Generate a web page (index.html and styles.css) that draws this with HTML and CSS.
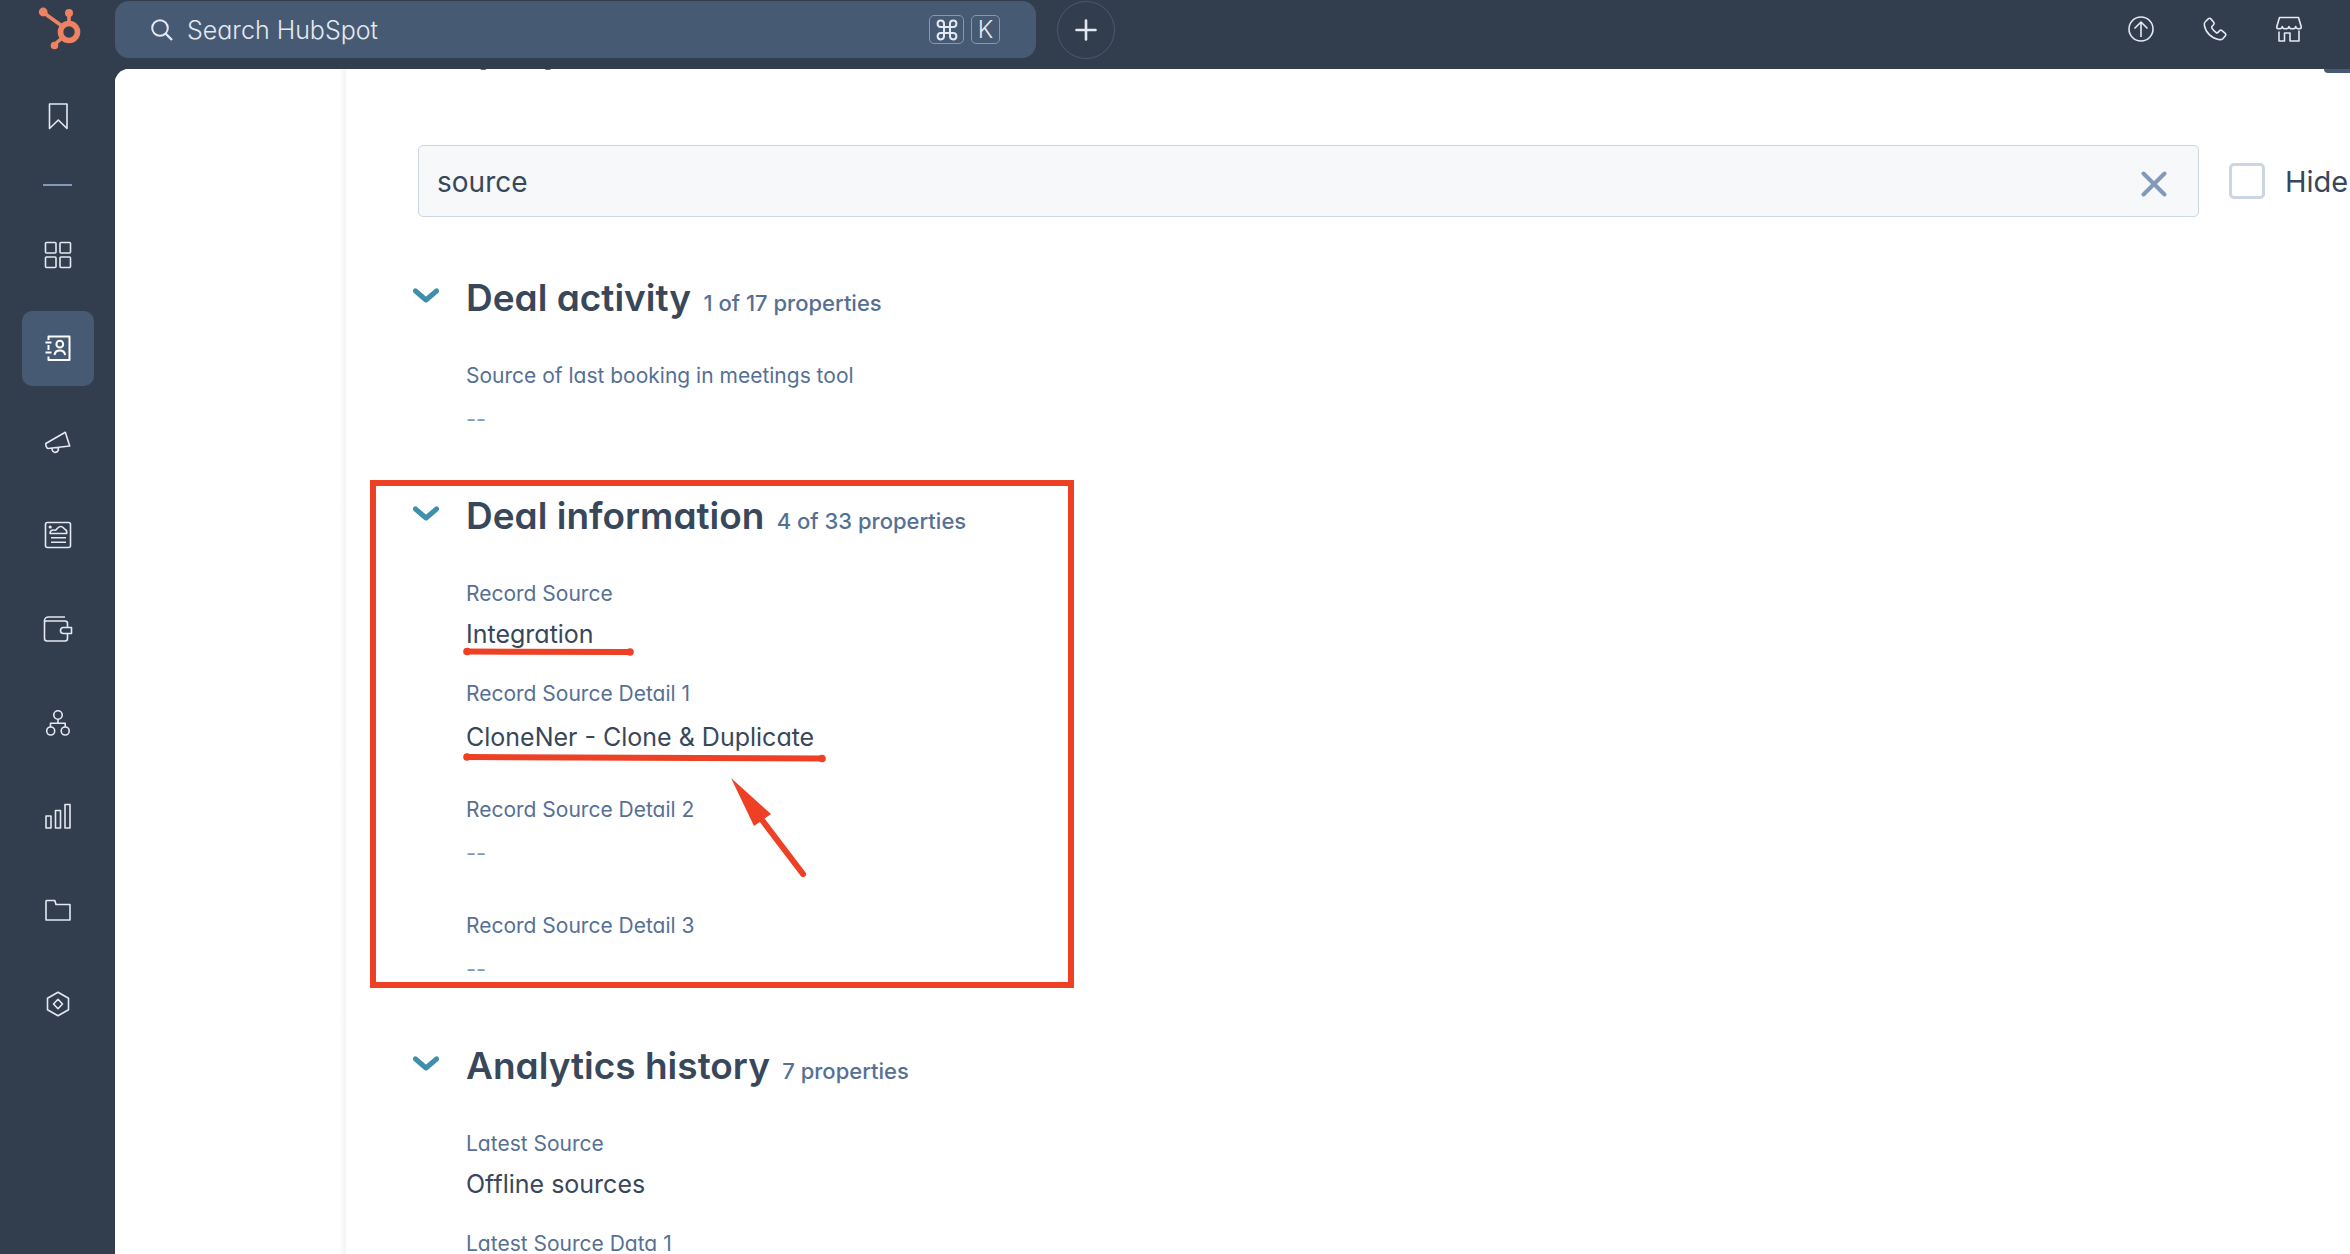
FILE: index.html
```html
<!DOCTYPE html>
<html lang="en">
<head>
<meta charset="utf-8">
<title>HubSpot – All properties</title>
<link rel="stylesheet" href="styles.css">
</head>
<body>
<div class="app">
  <header class="topbar">
    <a class="logo" href="#" aria-label="HubSpot home">
      <svg width="44" height="44" viewBox="0 0 44 44" fill="none" stroke="currentColor">
        <circle cx="31" cy="26" r="8.5" stroke-width="5.6"/>
        <path d="M31 17V8M6 7l18 13M16 39l8-7" stroke-width="3.6"/>
        <g fill="currentColor" stroke="none"><circle cx="5.200" cy="6" r="4.400"/><circle cx="31" cy="7" r="4"/><circle cx="16.500" cy="39.500" r="3.800"/></g>
      </svg>
    </a>
    <form class="search" role="search">
      <svg class="search-icon" width="24" height="24" viewBox="0 0 24 24" fill="none" stroke="currentColor" stroke-width="2"><circle cx="10" cy="10" r="7.800"/><path d="M15.500 15.500l6.500 6.500" stroke-width="2.400"/></svg>
      <input class="search-input" type="text" placeholder="Search HubSpot" aria-label="Search HubSpot">
      <kbd class="key key-cmd" aria-label="Command"><svg width="22" height="22" viewBox="0 0 22 22" fill="none" stroke="currentColor" stroke-width="2"><path d="M8 8H4.700A3.200 3.200 0 1 1 8 4.700V17.300A3.200 3.200 0 1 1 4.700 14H17.300A3.200 3.200 0 1 1 14 17.300V4.700A3.200 3.200 0 1 1 17.300 8Z"/></svg></kbd>
      <kbd class="key">K</kbd>
    </form>
    <button class="add" type="button" aria-label="Create">
      <svg width="22" height="22" viewBox="0 0 22 22" stroke="currentColor" stroke-width="2.600" stroke-linecap="round"><path d="M11 1.500v19M1.500 11h19"/></svg>
    </button>
    <nav class="tools" aria-label="Tools">
      <a href="#" aria-label="Upgrade"><svg width="28" height="28" viewBox="0 0 28 28"><circle cx="14" cy="14" r="12"/><path d="M14 22V7.500M7.500 13.500l6.500-6.500 6.500 6.500"/></svg></a>
      <a href="#" aria-label="Calling"><svg width="28" height="28" viewBox="0 0 28 28"><path d="M4.500 6.500L7.500 3.700c.8-.7 1.700-.6 2.400.2l2.800 3.300c.7.900.6 1.800-.1 2.600l-1.500 1.500c-.6.6-.6 1.100-.2 1.800 1.200 2 2.500 3.400 4.500 4.600.7.4 1.200.3 1.700-.3l1.400-1.600c.8-.8 1.700-.9 2.500-.2l3.200 2.700c.8.700.9 1.600.2 2.400l-2.600 3c-1 1.100-2.600 1.100-4.400.8C10.500 23.300 4.700 17.500 3.400 10.600c-.3-1.600-.1-3.100 1.100-4.100z"/></svg></a>
      <a href="#" aria-label="Marketplace"><svg width="28" height="28" viewBox="0 0 28 28"><path d="M4.500 2.500h19l2.800 9.500c0 1.200-1 1.800-2.300 1.800-1.800 0-3.300-1.300-3.300-2.300 0 1.300-1.500 2.300-3.300 2.300s-3.400-1-3.400-2.300c0 1.300-1.600 2.300-3.400 2.300s-3.300-1-3.300-2.300c0 1-1.500 2.300-3.300 2.300-1.300 0-2.300-.6-2.300-1.800zM4 16.500V26h5.500v-8H15v8h9V15.500"/></svg></a>
    </nav>
  </header>

  <div class="body">
    <nav class="sidebar" aria-label="Main">
      <a class="nav-item" href="#" aria-label="Bookmarks"><svg width="32" height="32" viewBox="0 0 32 32"><path d="M7.500 4h17.500v24.500l-8.700-8.500-8.800 8.500z"/></svg></a>
      <hr class="nav-rule">
      <div class="nav-list">
        <a class="nav-item" href="#" aria-label="Workspaces"><svg width="32" height="32" viewBox="0 0 32 32"><rect x="3.500" y="3.500" width="10.500" height="10.500" rx="1"/><rect x="18" y="3.500" width="10.500" height="10.500" rx="1"/><rect x="3.500" y="18" width="10.500" height="10.500" rx="1"/><rect x="18" y="18" width="10.500" height="10.500" rx="1"/></svg></a>
        <a class="nav-item is-active" href="#" aria-label="CRM" aria-current="page"><svg width="32" height="32" viewBox="0 0 32 32"><path d="M6.500 8V4.500h21v23.500h-21V24.500M6.500 13v5M3.500 10.500h6M3.500 20.500h6"/><circle cx="17.800" cy="12.200" r="3.400"/><path d="M12.500 23c.4-3 2.500-4.600 5.300-4.600s4.900 1.600 5.300 4.600"/></svg></a>
        <a class="nav-item" href="#" aria-label="Marketing"><svg width="32" height="32" viewBox="0 0 32 32"><path d="M3.800 17.500L23.300 6.300 27.700 20 6 22.500c-1.300 0-2.500-3.400-2.200-5zM10 22.500c.2 5.500 6.600 5 6.500-.8"/></svg></a>
        <a class="nav-item" href="#" aria-label="Content"><svg width="32" height="32" viewBox="0 0 32 32"><rect x="3.500" y="3.500" width="25" height="25" rx="2"/><path d="M8 14.500c0-3 2-4 4.500-3.300 2.500.5 2.500-3.700 6-3.700 2.800 0 3.200 2 4 2.500 1.700.5 2.500 2.300 2.200 4.500zM9 18.800h15M9 23.300h15"/><circle cx="8.200" cy="8" r=".8"/></svg></a>
        <a class="nav-item" href="#" aria-label="Commerce"><svg width="32" height="32" viewBox="0 0 32 32"><path d="M23 4H6.500c-2.300 0-4 1.500-4 3.500v18c0 1.500 1 2.500 2.500 2.500h18c1.500 0 2.500-1 2.500-2.500V21M25.500 14.500V10.500c0-1.500-1-2.500-2.500-2.500H4.500c-1 0-1.500.2-2 .8M29.500 14.500v6h-8c-1.700 0-3-1.300-3-3s1.300-3 3-3z"/></svg></a>
        <a class="nav-item" href="#" aria-label="Automation"><svg width="32" height="32" viewBox="0 0 32 32"><circle cx="16" cy="8" r="4.200"/><circle cx="8.700" cy="24" r="4"/><circle cx="23.200" cy="24" r="4"/><path d="M16 12.200v4M8.500 20v-3.800h14.700V20"/></svg></a>
        <a class="nav-item" href="#" aria-label="Reporting"><svg width="32" height="32" viewBox="0 0 32 32"><path d="M4 16h5v12H4zM13.500 10.500h5V28h-5zM23 4.500h5V28h-5z"/></svg></a>
        <a class="nav-item" href="#" aria-label="Library"><svg width="32" height="32" viewBox="0 0 32 32"><path d="M4.500 6.500h8.300l1.200 4h14v15.500H4V7z"/></svg></a>
        <a class="nav-item" href="#" aria-label="Data management"><svg width="32" height="32" viewBox="0 0 32 32"><path d="M16 4.300l10.500 6v11.400L16 27.700 5.500 21.700V10.300zM16 11.300l4.500 4.700-4.500 4.700-4.500-4.700z"/></svg></a>
      </div>
    </nav>

    <main class="page">
      <aside class="gutter"></aside>
      <div class="content">
        <button class="panel-tab" type="button" aria-label="Open panel"></button>
        <h1 class="title">All properties</h1>
        <div class="filter">
          <div class="field">
            <input class="field-input" type="text" value="source" aria-label="Search properties">
            <button class="clear" type="button" aria-label="Clear search"><svg width="26" height="26" viewBox="0 0 26 26" stroke="currentColor" stroke-width="4" stroke-linecap="round"><path d="M2.500 2.500l21 21M23.500 2.500l-21 21"/></svg></button>
          </div>
          <label class="hide"><input class="check" type="checkbox">Hide</label>
        </div>

        <section class="group">
          <button class="toggle" type="button" aria-label="Toggle Deal activity"><svg width="26" height="16" viewBox="0 0 26 16"><path d="M2.500 3l10.500 9 10.500-9"/></svg></button>
          <h2 class="heading">Deal activity <small class="count">1 of 17 properties</small></h2>
          <dl class="props">
            <div class="prop"><dt>Source of last booking in meetings tool</dt><dd class="empty">--</dd></div>
          </dl>
        </section>

        <section class="group">
          <button class="toggle" type="button" aria-label="Toggle Deal information"><svg width="26" height="16" viewBox="0 0 26 16"><path d="M2.500 3l10.500 9 10.500-9"/></svg></button>
          <h2 class="heading">Deal information <small class="count">4 of 33 properties</small></h2>
          <dl class="props">
            <div class="prop compact"><dt>Record Source</dt><dd>Integration</dd></div>
            <div class="prop"><dt>Record Source Detail 1</dt><dd>CloneNer - Clone &amp; Duplicate</dd></div>
            <div class="prop"><dt>Record Source Detail 2</dt><dd class="empty">--</dd></div>
            <div class="prop"><dt>Record Source Detail 3</dt><dd class="empty">--</dd></div>
          </dl>
          <svg class="markup" width="704" height="508" viewBox="0 0 704 508" fill="none" stroke="currentColor" stroke-width="6" stroke-linecap="round">
            <rect x="3" y="3" width="698" height="502"/>
            <path d="M97 171.500l163 .5M97 277l355 1.500M392 340l41 54"/>
            <g fill="currentColor" stroke="none"><circle cx="97" cy="171.500" r="3.800"/><circle cx="260" cy="172" r="3.800"/><circle cx="97" cy="277" r="3.800"/><circle cx="452" cy="278.500" r="3.800"/><path d="M361 298l40 36-17 12z"/></g>
          </svg>
        </section>

        <section class="group">
          <button class="toggle" type="button" aria-label="Toggle Analytics history"><svg width="26" height="16" viewBox="0 0 26 16"><path d="M2.500 3l10.500 9 10.500-9"/></svg></button>
          <h2 class="heading">Analytics history <small class="count">7 properties</small></h2>
          <dl class="props">
            <div class="prop compact"><dt>Latest Source</dt><dd>Offline sources</dd></div>
            <div class="prop"><dt>Latest Source Data 1</dt></div>
          </dl>
        </section>
      </div>
    </main>
  </div>
</div>
</body>
</html>
```
FILE: styles.css
```css
* { box-sizing: border-box; }

:root {
  --navy: #323e4e;
  --slate: #475a73;
  --pale: #e4e9f1;
  --ink: #38475a;
  --muted: #567094;
  --line: #cbd6e2;
}

body {
  margin: 0;
  font-family: Inter, "Noto Sans", sans-serif;
  font-feature-settings: "cv11";
  color: var(--ink);
  background: var(--navy);
}

button, input { font: inherit; font-feature-settings: inherit; color: inherit; }
button { padding: 0; border: 0; background: none; }
a { color: inherit; }
svg { display: block; }

.app { display: flex; flex-direction: column; height: 100vh; overflow: hidden; }

/* Top bar */
.topbar {
  flex: none;
  display: flex;
  align-items: flex-start;
  height: 69px;
  padding: 1px 47px 0 0;
  color: var(--pale);
}
.logo { flex: none; width: 115px; padding: 5px 0 0 38px; color: #f08264; }
.search {
  flex: 0 1 921px;
  display: flex;
  align-items: center;
  gap: 7px;
  height: 57px;
  padding: 0 36px 0 35px;
  border-radius: 14px;
  background: var(--slate);
}
.search-input {
  flex: 1;
  min-width: 0;
  padding: 0 0 0 6px;
  border: 0;
  background: none;
  font-size: 25px;
  font-weight: 300;
}
.search-input::placeholder { color: var(--pale); opacity: 1; }
.key {
  display: flex;
  align-items: center;
  justify-content: center;
  width: 29px;
  height: 29px;
  border: 1px solid #8599b5;
  border-radius: 5px;
  font-family: inherit;
  font-size: 24px;
  font-weight: 300;
}
.key-cmd { width: 35px; }
.add {
  display: flex;
  align-items: center;
  justify-content: center;
  width: 58px;
  height: 58px;
  margin-left: 21px;
  border: 1px solid var(--slate);
  border-radius: 50%;
}
.tools { display: flex; gap: 46px; margin-left: auto; padding-top: 14px; }
.tools svg, .nav-item svg { fill: none; stroke: currentColor; stroke-width: 1.6; stroke-linejoin: round; }

/* Sidebar */
.body { flex: 1; display: flex; min-height: 0; }
.sidebar {
  flex: none;
  display: flex;
  flex-direction: column;
  align-items: center;
  width: 115px;
  padding-top: 9px;
  color: var(--pale);
}
.nav-item {
  flex: none;
  display: flex;
  align-items: center;
  justify-content: center;
  width: 72px;
  height: 75px;
  border-radius: 10px;
}
.nav-item.is-active { background: var(--slate); color: #fff; }
.nav-item.is-active svg { stroke-width: 2; }
.nav-rule { width: 29px; height: 2px; margin: 31px 0; border: 0; background: #8299b8; }
.nav-list { flex: none; display: flex; flex-direction: column; justify-content: space-between; height: 824px; }

/* Page */
.page { flex: 1; display: flex; min-width: 0; overflow: hidden; border-top-left-radius: 14px; background: #fff; }
.gutter { flex: none; width: 231px; background: linear-gradient(to left, #f4f4f4, #fff 7px); }
.content { flex: 1; position: relative; min-width: 0; padding-left: 72px; }
.panel-tab {
  position: absolute;
  top: 0;
  right: 0;
  width: 26px;
  height: 4px;
  border-bottom-left-radius: 4px;
  background: var(--slate);
}
.title { margin: -45px 0 73px; font-size: 40px; line-height: 48px; font-weight: 600; }

.filter { display: flex; align-items: center; gap: 30px; }
.field {
  flex: 1;
  display: flex;
  align-items: center;
  height: 72px;
  padding: 0 31px 0 18px;
  border: 1px solid var(--line);
  border-radius: 5px;
  background: #f6f8fa;
}
.field-input { flex: 1; min-width: 0; padding: 2px 0 0; border: 0; background: none; font-size: 28px; }
.clear { color: #8299b8; padding-top: 5px; }
.hide {
  flex: none;
  display: flex;
  align-items: center;
  gap: 20px;
  width: 121px;
  font-size: 29px;
}
.check {
  appearance: none;
  flex: none;
  width: 36px;
  height: 36px;
  margin: 0;
  border: 3px solid var(--line);
  border-radius: 5px;
  background: #fff;
}

/* Property groups */
.group {
  position: relative;
  display: grid;
  grid-template-columns: 48px 1fr;
  align-items: start;
}
.filter + .group { margin-top: 57px; }
.toggle { justify-self: start; padding: 14px 0 0; margin-left: -5px; }
.toggle path { fill: none; stroke: #3d8fab; stroke-width: 5; stroke-linecap: round; stroke-linejoin: round; }
.heading { margin: 0; font-size: 37px; line-height: 48px; font-weight: 600; }
.count { margin-left: 3px; font-size: 22px; line-height: 24px; font-weight: 500; color: var(--muted); }
.props { grid-column: 2; margin: 39px 0 0; }
.prop { height: 116px; }
.prop.compact { height: 100px; }
.prop dt { font-size: 21px; line-height: 30px; color: var(--muted); }
.prop dd { margin: 0; padding-top: 10px; font-size: 25px; line-height: 36px; }
.prop.compact dd { padding-top: 7px; }
.prop .empty { color: #8299b8; font-size: 22px; }
.prop:last-child { margin-bottom: 15px; }

/* Hand-drawn callout over the group */
.markup { position: absolute; top: -12px; left: -48px; color: #ee4025; pointer-events: none; }
```
